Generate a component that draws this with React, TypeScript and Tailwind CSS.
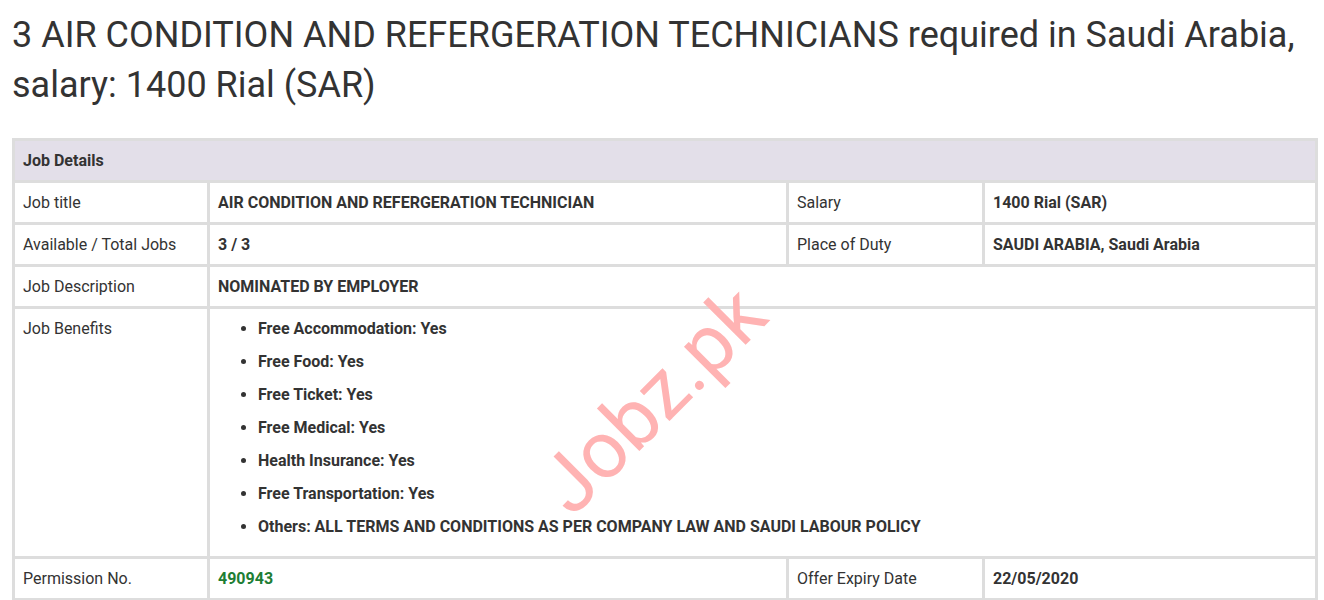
const benefits = [
  "Free Accommodation: Yes",
  "Free Food: Yes",
  "Free Ticket: Yes",
  "Free Medical: Yes",
  "Health Insurance: Yes",
  "Free Transportation: Yes",
  "Others: ALL TERMS AND CONDITIONS AS PER COMPANY LAW AND SAUDI LABOUR POLICY",
];

const App = () => {
  return (
    <div className="bg-white min-h-screen px-3 pt-[10px] text-[#333] font-['Roboto',sans-serif]">
      <h1 className="text-[36px] leading-[50px] font-normal mb-[28px]">
        3 AIR CONDITION AND REFERGERATION TECHNICIANS required in Saudi Arabia,
        salary: 1400 Rial (SAR)
      </h1>

      <div className="relative w-[1306px]">
        <table className="w-full table-fixed border-separate border-spacing-[3px] bg-[#dddddd] text-[16px] leading-[23px]">
          <colgroup>
            <col className="w-[192px]" />
            <col className="w-[576px]" />
            <col className="w-[193px]" />
            <col />
          </colgroup>
          <tbody>
            <tr>
              <th colSpan={4} className="bg-[#e3dfe9] text-left font-bold px-2 py-2">
                Job Details
              </th>
            </tr>
            <tr className="bg-white">
              <td className="px-2 py-2">Job title</td>
              <td className="px-2 py-2 font-bold">AIR CONDITION AND REFERGERATION TECHNICIAN</td>
              <td className="px-2 py-2">Salary</td>
              <td className="px-2 py-2 font-bold">1400 Rial (SAR)</td>
            </tr>
            <tr className="bg-white">
              <td className="px-2 py-2">Available / Total Jobs</td>
              <td className="px-2 py-2 font-bold">3 / 3</td>
              <td className="px-2 py-2">Place of Duty</td>
              <td className="px-2 py-2 font-bold">SAUDI ARABIA, Saudi Arabia</td>
            </tr>
            <tr className="bg-white">
              <td className="px-2 py-2">Job Description</td>
              <td colSpan={3} className="px-2 py-2 font-bold">NOMINATED BY EMPLOYER</td>
            </tr>
            <tr className="bg-white">
              <td className="px-2 py-2 align-top">Job Benefits</td>
              <td colSpan={3} className="px-2 py-2 align-top">
                <ul className="list-disc pl-10 font-bold">
                  {benefits.map((b, i) => (
                    <li key={i} className="mb-[10px]">
                      {b}
                    </li>
                  ))}
                </ul>
              </td>
            </tr>
            <tr className="bg-white">
              <td className="px-2 py-2">Permission No.</td>
              <td className="px-2 py-2 font-bold text-[#1e7e34]">490943</td>
              <td className="px-2 py-2">Offer Expiry Date</td>
              <td className="px-2 py-2 font-bold">22/05/2020</td>
            </tr>
          </tbody>
        </table>

        {/* watermark */}
        <div className="absolute left-[500px] top-[222px] -rotate-45 text-[80px] leading-none text-[#ffb3b3] pointer-events-none select-none">
          Jobz.pk
        </div>
      </div>
    </div>
  );
};

export default App;
